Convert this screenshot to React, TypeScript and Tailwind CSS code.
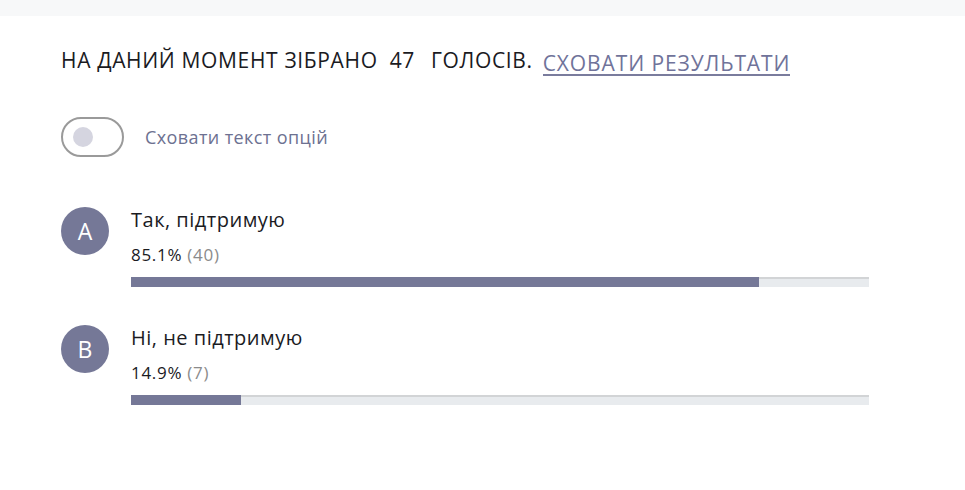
import React from "react";

const options = [
  { letter: "A", text: "Так, підтримую", percent: 85.1, votes: 40 },
  { letter: "B", text: "Ні, не підтримую", percent: 14.9, votes: 7 },
];

export default function App() {
  return (
    <div className="w-[965px] h-[490px] bg-white font-['Open_Sans',sans-serif] text-[#1b1b1f]">
      <div className="h-4 bg-[#f7f8f9]" />
      <div className="pl-[61px] pt-[33px]">
        <div className="flex items-center h-6 text-[21px] uppercase tracking-[0.65px]">
          <span>На даний момент зібрано</span>
          <span className="ml-[12px] mr-[16px]">47</span>
          <span>голосів.</span>
          <span className="ml-[10px] text-[#70739a] border-b-2 border-[#7a7c9d] leading-[22px] pt-[5px] tracking-[0.9px]">
            Сховати результати
          </span>
        </div>

        <div className="flex items-center mt-[44px]">
          <div className="w-[63px] h-[40px] rounded-full border-2 border-[#9a9a9a] flex items-center pl-[10px]">
            <div className="w-5 h-5 rounded-full bg-[#d5d5e0]" />
          </div>
          <span className="ml-[21px] text-[18px] tracking-[0.4px] text-[#6d7191]">Сховати текст опцій</span>
        </div>

        <div className="mt-[50px] flex flex-col gap-[38px]">
          {options.map((o) => (
            <div key={o.letter} className="flex">
              <div className="w-12 h-12 rounded-full bg-[#757897] text-white text-[23px] flex items-center justify-center shrink-0">
                {o.letter}
              </div>
              <div className="ml-[22px] w-[738px]">
                <div className="text-[20px] tracking-[0.5px] leading-6 mt-[1px]">{o.text}</div>
                <div className="text-[17px] tracking-[0.7px] leading-5 mt-[13px]">
                  {o.percent}% <span className="text-[#8b8b8b]">({o.votes})</span>
                </div>
                <div className="mt-[12px] h-[10px] bg-[#e8ebee] border-t-2 border-[#d2d4d6] relative">
                  <div
                    className="absolute left-0 -top-[2px] h-[10px] bg-[#757897]"
                    style={{ width: `${o.percent}%` }}
                  />
                </div>
              </div>
            </div>
          ))}
        </div>
      </div>
    </div>
  );
}
